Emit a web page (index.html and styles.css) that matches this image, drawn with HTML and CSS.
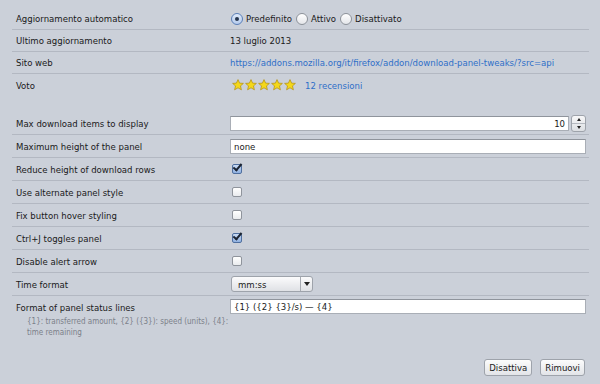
FILE: index.html
```html
<!DOCTYPE html>
<html lang="it">
<head>
  <meta charset="UTF-8" />
  <title>Download Panel Tweaks</title>
  <link rel="stylesheet" href="styles.css">
</head>
<body>
  <div class="details">
    <div class="group">
      <div class="row">
        <span class="label">Aggiornamento automatico</span>
        <div class="value radios">
          <label><input type="radio" name="upd" checked> Predefinito</label>
          <label><input type="radio" name="upd"> Attivo</label>
          <label><input type="radio" name="upd"> Disattivato</label>
        </div>
      </div>
      <div class="row">
        <span class="label">Ultimo aggiornamento</span>
        <div class="value">13 luglio 2013</div>
      </div>
      <div class="row">
        <span class="label">Sito web</span>
        <div class="value"><a href="#">https://addons.mozilla.org/it/firefox/addon/download-panel-tweaks/?src=api</a></div>
      </div>
      <div class="row last">
        <span class="label">Voto</span>
        <div class="value rating">
          <span class="stars">
            <svg viewBox="0 0 12 12"><polygon points="6,0.6 7.6,4.1 11.4,4.4 8.5,6.9 9.4,10.8 6,8.8 2.6,10.8 3.5,6.9 0.6,4.4 4.4,4.1"/></svg>
            <svg viewBox="0 0 12 12"><polygon points="6,0.6 7.6,4.1 11.4,4.4 8.5,6.9 9.4,10.8 6,8.8 2.6,10.8 3.5,6.9 0.6,4.4 4.4,4.1"/></svg>
            <svg viewBox="0 0 12 12"><polygon points="6,0.6 7.6,4.1 11.4,4.4 8.5,6.9 9.4,10.8 6,8.8 2.6,10.8 3.5,6.9 0.6,4.4 4.4,4.1"/></svg>
            <svg viewBox="0 0 12 12"><polygon points="6,0.6 7.6,4.1 11.4,4.4 8.5,6.9 9.4,10.8 6,8.8 2.6,10.8 3.5,6.9 0.6,4.4 4.4,4.1"/></svg>
            <svg viewBox="0 0 12 12"><polygon points="6,0.6 7.6,4.1 11.4,4.4 8.5,6.9 9.4,10.8 6,8.8 2.6,10.8 3.5,6.9 0.6,4.4 4.4,4.1"/></svg>
          </span>
          <a href="#">12 recensioni</a>
        </div>
      </div>
    </div>

    <div class="group prefs">
      <div class="row">
        <span class="label">Max download items to display</span>
        <div class="value number">
          <input type="text" class="field right" value="10">
          <span class="spinner"><span class="up"></span><span class="down"></span></span>
        </div>
      </div>
      <div class="row">
        <span class="label">Maximum height of the panel</span>
        <div class="value"><input type="text" class="field" value="none"></div>
      </div>
      <div class="row">
        <span class="label">Reduce height of download rows</span>
        <div class="value"><input type="checkbox" checked></div>
      </div>
      <div class="row">
        <span class="label">Use alternate panel style</span>
        <div class="value"><input type="checkbox"></div>
      </div>
      <div class="row">
        <span class="label">Fix button hover styling</span>
        <div class="value"><input type="checkbox"></div>
      </div>
      <div class="row">
        <span class="label">Ctrl+J toggles panel</span>
        <div class="value"><input type="checkbox" checked></div>
      </div>
      <div class="row">
        <span class="label">Disable alert arrow</span>
        <div class="value"><input type="checkbox"></div>
      </div>
      <div class="row">
        <span class="label">Time format</span>
        <div class="value">
          <div class="select"><span>mm:ss</span><span class="arrow"></span></div>
        </div>
      </div>
      <div class="row last top">
        <div class="label">
          Format of panel status lines
          <p class="hint">{1}: transferred amount, {2} ({3}): speed (units), {4}: time remaining</p>
        </div>
        <div class="value"><input type="text" class="field" value="{1} ({2} {3}/s) — {4}"></div>
      </div>
    </div>

    <div class="actions">
      <button>Disattiva</button>
      <button>Rimuovi</button>
    </div>
  </div>
</body>
</html>
```

FILE: styles.css
```css
* {
  box-sizing: border-box;
  margin: 0;
  padding: 0;
}

body {
  background: #cbd0d9;
  font-family: 'DejaVu Sans Condensed', 'DejaVu Sans', sans-serif;
  font-size: 9.5px;
  color: #1a1a1a;
  width: 600px;
  height: 384px;
  overflow: hidden;
}

.details {
  padding: 8px 11px 0 12px;
}

.row {
  display: grid;
  grid-template-columns: 218px 1fr;
  align-items: center;
  min-height: 22px;
  border-bottom: 1px solid #b3b8c2;
}

.row.last {
  border-bottom: none;
}

.row.top {
  align-items: start;
  padding-top: 3px;
}

.label {
  padding-left: 4px;
}

.top .label {
  padding-top: 3px;
}

.value {
  display: flex;
  align-items: center;
  white-space: nowrap;
}

a {
  color: #2f6fc8;
  text-decoration: none;
}

/* radios */
.radios label {
  display: flex;
  align-items: center;
  margin-right: 3px;
}

input[type="radio"] {
  appearance: none;
  width: 12px;
  height: 12px;
  border: 1px solid #8d929a;
  border-radius: 50%;
  background: linear-gradient(#ffffff, #e4e6ea);
  margin: 0 3px 0 1px;
  position: relative;
}

input[type="radio"]:checked::after {
  content: "";
  position: absolute;
  left: 3px;
  top: 3px;
  width: 4px;
  height: 4px;
  border-radius: 50%;
  background: #26364f;
}

input[type="radio"]:checked {
  border-color: #5a7fb8;
  background: linear-gradient(#dfeafa, #b6cbec);
}

/* rating */
.stars {
  display: flex;
  gap: 1px;
  margin: 0 9px 0 2px;
}

.stars svg {
  width: 12px;
  height: 12px;
  fill: #f4d81a;
  stroke: #b08d12;
  stroke-width: 0.7;
}

/* preferences */
.prefs {
  margin-top: 16px;
}

.prefs .row {
  min-height: 23px;
}

.field {
  width: 356px;
  height: 15px;
  border: 1px solid #a9aeb6;
  border-top-color: #8f949c;
  background: #fff;
  font: inherit;
  padding: 0 3px;
  color: #1a1a1a;
}

.field.right {
  width: 339px;
  text-align: right;
}

.spinner {
  display: flex;
  flex-direction: column;
  width: 15px;
  height: 17px;
  margin-left: 2px;
  border: 1px solid #9ea3ab;
  border-radius: 3px;
  background: linear-gradient(#f7f7f8, #dcdfe3);
}

.spinner span {
  flex: 1;
  position: relative;
}

.spinner .up {
  border-bottom: 1px solid #b5b9c0;
}

.spinner .up::after,
.spinner .down::after {
  content: "";
  position: absolute;
  left: 5px;
  top: 2px;
  border-left: 2.5px solid transparent;
  border-right: 2.5px solid transparent;
}

.spinner .up::after {
  border-bottom: 3px solid #222;
}

.spinner .down::after {
  border-top: 3px solid #222;
}

input[type="checkbox"] {
  appearance: none;
  width: 10px;
  height: 10px;
  margin-left: 2px;
  border: 1px solid #8f949c;
  border-radius: 2px;
  background: linear-gradient(#ffffff, #e9ebee);
  position: relative;
}

input[type="checkbox"]:checked {
  border-color: #4f6f9f;
  background: linear-gradient(#c9dbf5, #8fb0e0);
}

input[type="checkbox"]:checked::after {
  content: "";
  position: absolute;
  left: 2px;
  top: -3px;
  width: 3px;
  height: 7px;
  border-right: 2px solid #1b2433;
  border-bottom: 2px solid #1b2433;
  transform: rotate(40deg);
}

.select {
  display: flex;
  width: 82px;
  height: 16px;
  margin-left: 1px;
  border: 1px solid #9ea3ab;
  border-radius: 3px;
  background: linear-gradient(#fbfbfc, #dfe1e5);
  align-items: center;
}

.select span:first-child {
  flex: 1;
  padding-left: 6px;
}

.select .arrow {
  width: 12px;
  height: 100%;
  border-left: 1px solid #a7abb2;
  position: relative;
}

.select .arrow::after {
  content: "";
  position: absolute;
  left: 3px;
  top: 5px;
  border-left: 3px solid transparent;
  border-right: 3px solid transparent;
  border-top: 4px solid #222;
}

.hint {
  font-size: 8px;
  color: #7b8089;
  margin: 3px 0 0 11px;
  width: 205px;
  line-height: 11px;
}

.actions {
  display: flex;
  justify-content: flex-end;
  gap: 8px;
  margin-top: 21px;
  padding-right: 4px;
}

.actions button {
  font: inherit;
  height: 17px;
  padding: 0 4px;
  border: 1px solid #9ea3ab;
  border-radius: 3px;
  background: linear-gradient(#fcfcfc, #e2e4e8);
  color: #1a1a1a;
}
```
